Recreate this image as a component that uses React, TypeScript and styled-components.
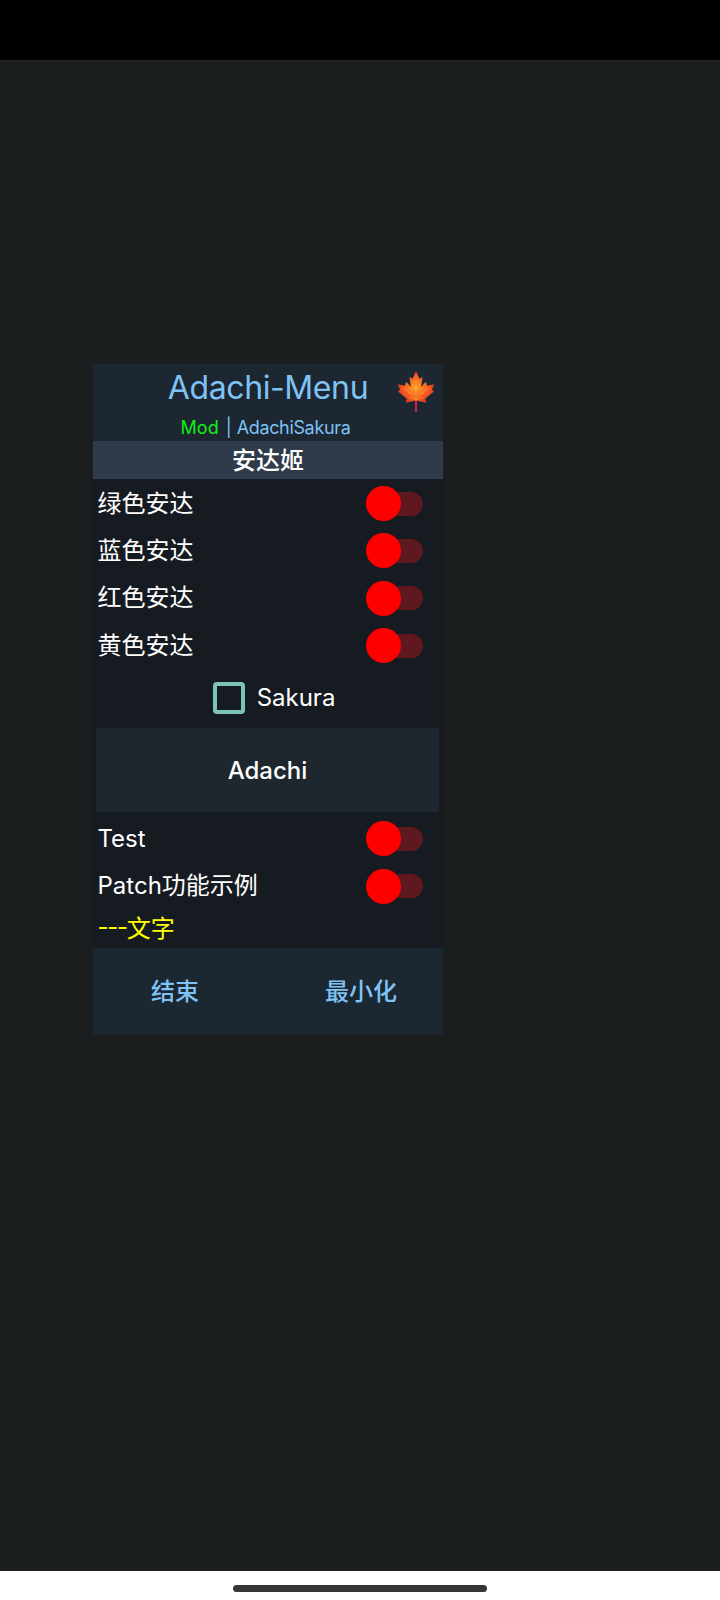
import React from 'react';
import styled, { createGlobalStyle } from 'styled-components';

const GlobalStyle = createGlobalStyle`
  html, body {
    margin: 0;
    padding: 0;
    background: #1a1e1f;
  }
  * {
    box-sizing: border-box;
  }
`;

const FONT = `"Inter", "Noto Sans CJK SC", sans-serif`;

const Screen = styled.div`
  width: 720px;
  height: 1600px;
  display: flex;
  flex-direction: column;
  font-family: ${FONT};
  color: #fff;
`;

const StatusBar = styled.div`
  height: 60px;
  background: #000;
`;

const Main = styled.main`
  flex: 1;
  background: #1a1e1f;
  border-top: 1px solid #202525;
  padding: 303px 0 0 93px;
`;

const NavBar = styled.div`
  height: 29px;
  background: #fff;
  display: flex;
  justify-content: center;
  padding-top: 14px;
`;

const HomePill = styled.div`
  width: 254px;
  height: 7px;
  border-radius: 4px;
  background: #363636;
`;

const Panel = styled.section`
  width: 350px;
  background: #161b22;
  display: flex;
  flex-direction: column;
`;

const Header = styled.header`
  position: relative;
  height: 77px;
  background: #1c2732;
  display: flex;
  flex-direction: column;
  align-items: center;
`;

const Title = styled.div`
  margin-top: 3px;
  font-size: 32px;
  line-height: 42px;
  letter-spacing: -0.4px;
  color: #7fc3f5;
`;

const Subtitle = styled.div`
  margin-top: 8px;
  padding-right: 5px;
  display: flex;
  font-size: 18px;
  line-height: 22px;
  color: #7fc3f5;
`;

const Mod = styled.span`
  color: #14ee14;
`;

const Divider = styled.span`
  margin-left: 7px;
`;

const Author = styled.span`
  margin-left: 5px;
  letter-spacing: -0.35px;
`;

const Leaf = styled.svg`
  position: absolute;
  top: 7px;
  right: 8px;
  width: 38px;
  height: 41px;
`;

const SectionTitle = styled.div`
  height: 38px;
  padding-bottom: 4px;
  background: #2f3b49;
  display: flex;
  align-items: center;
  justify-content: center;
  font-size: 24px;
  font-weight: 500;
`;

const Rows = styled.div`
  display: flex;
  flex-direction: column;
  padding-top: 1px;
`;

const Row = styled.div`
  height: 47.3px;
  display: flex;
  align-items: center;
  justify-content: space-between;
  padding: 0 20px 0 4.5px;
  font-size: 24px;
`;

const RowLabel = styled.span`
  line-height: 32px;
`;

const Track = styled.div`
  position: relative;
  width: 46px;
  height: 24px;
  margin-left: 11px;
  border-radius: 12px;
  background: #5f181d;
`;

const Thumb = styled.div`
  position: absolute;
  top: -5.5px;
  left: -11px;
  width: 35px;
  height: 35px;
  border-radius: 50%;
  background: #ff0000;
`;

const CheckRow = styled.div`
  height: 57px;
  padding-left: 12px;
  display: flex;
  align-items: center;
  justify-content: center;
  gap: 12px;
  font-size: 24px;
`;

const CheckBox = styled.div`
  width: 32px;
  height: 32px;
  border: 4px solid #7cc4ba;
  border-radius: 4px;
`;

const WideButton = styled.div`
  height: 84px;
  margin: 2px 4px 2px 3px;
  background: #1d272d;
  display: flex;
  align-items: center;
  justify-content: center;
  font-size: 24px;
  font-weight: 450;
`;

const Note = styled.div`
  height: 38px;
  padding: 0 4.5px 4px;
  display: flex;
  align-items: center;
  font-size: 24px;
  color: #ffff00;
`;

const Dashes = styled.span`
  letter-spacing: -1.3px;
`;

const Footer = styled.footer`
  height: 86px;
  padding-bottom: 2px;
  background: #1b2731;
  display: flex;
  align-items: center;
  justify-content: space-between;
`;

const FooterButton = styled.div`
  width: 164px;
  text-align: center;
  font-size: 24px;
  font-weight: 500;
  color: #7fc3f5;
`;

const Switch = () => (
  <Track>
    <Thumb />
  </Track>
);

const MapleLeaf = () => (
  <Leaf viewBox="0 0 36 40">
    <defs>
      <radialGradient id="leafFill" cx="50%" cy="52%" r="58%">
        <stop offset="0%" stopColor="#ffa52a" />
        <stop offset="50%" stopColor="#f8641f" />
        <stop offset="100%" stopColor="#dd2a22" />
      </radialGradient>
    </defs>
    <rect x="17.1" y="26" width="1.8" height="14" fill="#d42a3c" />
    <path
      d="M18 0L21.5 7.5L24.5 5.5L23 15.5L27.5 10.5L29 14.5L36 13L33.5 18L35.5 20L27 27L28 31L19 29H17L8 31L9 27L.5 20L2.5 18L0 13L7 14.5L8.5 10.5L13 15.5L11.5 5.5L14.5 7.5Z"
      fill="url(#leafFill)"
    />
    <path
      d="M18 5V29M18 27L30 16M18 27L6 16M18 28L25 26M18 28L11 26"
      stroke="#ffc04a"
      strokeWidth=".7"
      strokeOpacity=".6"
      fill="none"
    />
  </Leaf>
);

const topRows = ['绿色安达', '蓝色安达', '红色安达', '黄色安达'];
const bottomRows = ['Test', 'Patch功能示例'];

export default function App() {
  return (
    <>
      <GlobalStyle />
      <Screen>
        <StatusBar />
        <Main>
          <Panel>
            <Header>
              <Title>Adachi-Menu</Title>
              <Subtitle>
                <Mod>Mod</Mod>
                <Divider>|</Divider>
                <Author>AdachiSakura</Author>
              </Subtitle>
              <MapleLeaf />
            </Header>
            <SectionTitle>安达姬</SectionTitle>
            <Rows>
              {topRows.map((label) => (
                <Row key={label}>
                  <RowLabel>{label}</RowLabel>
                  <Switch />
                </Row>
              ))}
            </Rows>
            <CheckRow>
              <CheckBox />
              Sakura
            </CheckRow>
            <WideButton>Adachi</WideButton>
            <Rows>
              {bottomRows.map((label) => (
                <Row key={label}>
                  <RowLabel>{label}</RowLabel>
                  <Switch />
                </Row>
              ))}
            </Rows>
            <Note>
              <Dashes>---</Dashes>文字
            </Note>
            <Footer>
              <FooterButton>结束</FooterButton>
              <FooterButton>最小化</FooterButton>
            </Footer>
          </Panel>
        </Main>
        <NavBar>
          <HomePill />
        </NavBar>
      </Screen>
    </>
  );
}
